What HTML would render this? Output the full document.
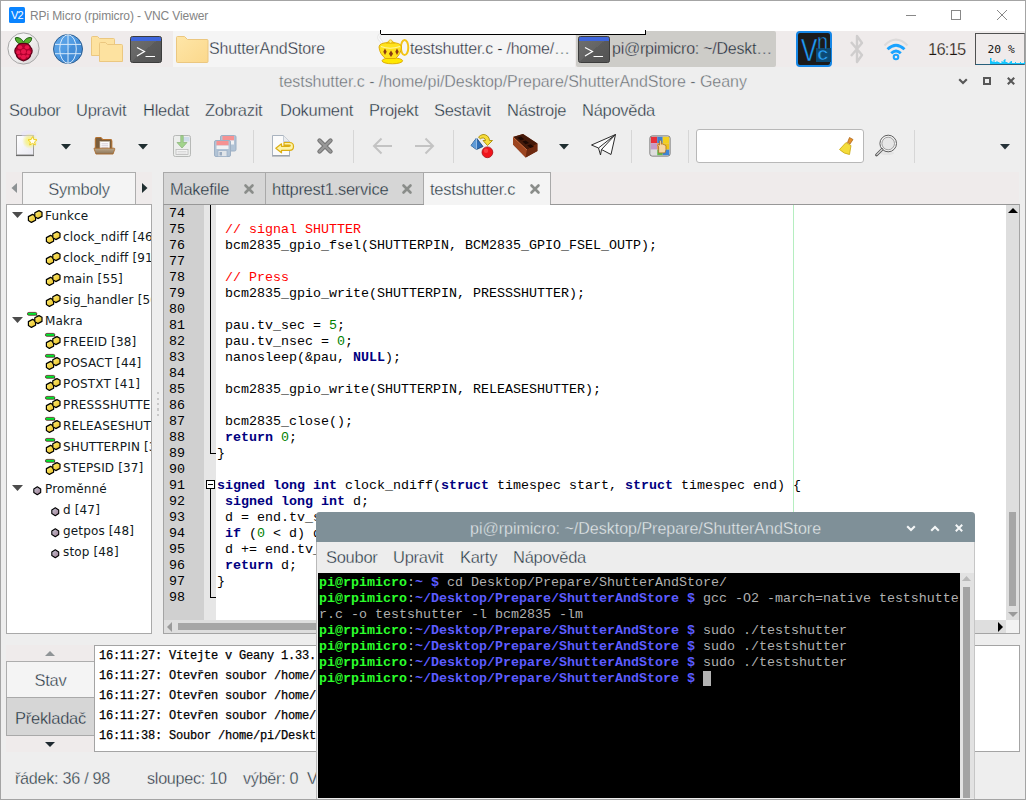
<!DOCTYPE html>
<html lang="cs">
<head>
<meta charset="utf-8">
<title>RPi Micro (rpimicro) - VNC Viewer</title>
<style>
*{box-sizing:border-box;margin:0;padding:0}
html,body{width:1026px;height:800px;overflow:hidden;background:#eeeeee}
body{position:relative;font-family:"Liberation Sans",sans-serif;color:#333}
.a{position:absolute}
.ui{-webkit-text-stroke:0.35px #ededed;position:absolute;font-family:"Liberation Sans",sans-serif;color:#22303c;white-space:nowrap;font-size:16.5px;line-height:20px;letter-spacing:-0.28px}
.mono{font-family:"Liberation Mono",monospace;white-space:pre}
.tree{position:absolute;font-family:"DejaVu Sans",sans-serif;font-size:12px;line-height:21px;color:#101820;white-space:nowrap;letter-spacing:0.15px}
.sep{position:absolute;top:130px;width:1px;height:33px;background:#d6d6d6}
svg{position:absolute;overflow:visible}
/* code */
#code{position:absolute;left:217px;top:206px;font-family:"Liberation Mono",monospace;font-size:13.33px;line-height:16px;white-space:pre;color:#000}
#code b{color:#00007f;font-weight:bold}
#code i{color:#ff0000;font-style:normal}
#code u{color:#007f00;text-decoration:none}
#lnum{position:absolute;left:169px;top:206px;font-family:"Liberation Mono",monospace;font-size:13.33px;line-height:16px;white-space:pre;color:#000}
#msgs{position:absolute;left:99px;top:646px;font-family:"Liberation Mono",monospace;font-size:12px;letter-spacing:-0.2px;line-height:20px;white-space:pre;color:#000;width:218px;overflow:hidden;-webkit-text-stroke:0.25px #000}
#term{position:absolute;left:319px;top:575px;font-family:"Liberation Mono",monospace;font-size:13.33px;line-height:16px;white-space:pre;color:#b0b0b0}
#term .g{color:#2bff2b;font-weight:bold}
#term .b{color:#5c5cff;font-weight:bold}
</style>
</head>
<body>
<!-- ================= VNC Viewer title bar ================= -->
<div class="a" style="left:0;top:0;width:1026px;height:31px;background:#fff"></div>
<div class="a" style="left:9px;top:7px;width:16px;height:16px;background:#0a84ff;border-radius:1.5px"></div>
<div class="a" style="left:10px;top:8px;width:14px;height:14px;font:11px/15px 'Liberation Sans',sans-serif;color:#fff;letter-spacing:-0.8px;text-align:center">V2</div>
<div class="a" style="left:30px;top:8px;font:12px/16px 'Liberation Sans',sans-serif;color:#848484;white-space:nowrap;letter-spacing:-0.11px">RPi Micro (rpimicro) - VNC Viewer</div>
<!-- window controls -->
<div class="a" style="left:906px;top:15px;width:10px;height:1px;background:#888"></div>
<div class="a" style="left:951px;top:10px;width:10px;height:10px;border:1px solid #888"></div>
<svg style="left:997px;top:10px" width="10" height="10" viewBox="0 0 10 10"><path d="M0 0 L10 10 M10 0 L0 10" stroke="#888" stroke-width="1" fill="none"/></svg>

<!-- ================= LXDE panel ================= -->
<div class="a" style="left:1px;top:31px;width:1024px;height:36px;background:#efebeb"></div>
<!-- task button: ShutterAndStore -->
<div class="a" style="left:173px;top:31px;width:202px;height:36px;background:#f5f5f5"></div>
<!-- task button: geany -->
<div class="a" style="left:375px;top:31px;width:200px;height:36px;background:#f5f5f5"></div>
<!-- task button: terminal (active) -->
<div class="a" style="left:576px;top:31px;width:200px;height:36px;background:#cdccc8;border-radius:2px"></div>
<!-- tooltip remnant -->
<div class="a" style="left:380px;top:30px;width:266px;height:5px;background:#fff;border:1px solid #000;border-top:0"></div>

<!-- raspberry menu icon -->
<svg style="left:6.500px;top:32px" width="33" height="33" viewBox="0 0 33 33">
<defs><linearGradient id="rc" x1="0" y1="0" x2="1" y2="1"><stop offset="0" stop-color="#fbfbfb"/><stop offset=".55" stop-color="#efeded"/><stop offset="1" stop-color="#d4d2d2"/></linearGradient></defs>
<circle cx="16.500" cy="16.500" r="15.600" fill="url(#rc)" stroke="#a6a6a6" stroke-width="1"/>
<g transform="translate(0 .7)"><path d="M16.500 9.500 C14.500 5 10 4.300 8.300 5.200 C8.300 9 11.500 11.800 16.500 11.500 C21.500 11.800 24.700 9 24.700 5.200 C23 4.300 18.500 5 16.500 9.500Z" fill="#55b030" stroke="#1f5a12" stroke-width="1"/>
<path d="M16.500 10.800 C20 10.300 23 12 23.500 14.500 C25.500 16 25.800 19.500 24 21.500 C23.500 24.500 21 27 16.500 28.300 C12 27 9.500 24.500 9 21.500 C7.200 19.500 7.500 16 9.500 14.500 C10 12 13 10.300 16.500 10.800Z" fill="#b0002e" stroke="#5c0018" stroke-width="1.100"/>
<g fill="#e8174c"><ellipse cx="13" cy="14.600" rx="2.300" ry="2"/><ellipse cx="20" cy="14.600" rx="2.300" ry="2"/><circle cx="16.500" cy="18.800" r="2.500"/><circle cx="11.300" cy="19.600" r="2"/><circle cx="21.700" cy="19.600" r="2"/><ellipse cx="16.500" cy="24.300" rx="2.600" ry="2.200"/><circle cx="12.500" cy="23.300" r="1.500"/><circle cx="20.500" cy="23.300" r="1.500"/></g></g>
</svg>
<!-- globe icon -->
<svg style="left:53px;top:34px" width="30" height="30" viewBox="0 0 30 30">
<defs><linearGradient id="gb" x1="0" y1="0" x2="1" y2="1"><stop offset="0" stop-color="#63a9ea"/><stop offset=".5" stop-color="#4f9ae2"/><stop offset=".5" stop-color="#4690da"/><stop offset="1" stop-color="#3f88d2"/></linearGradient></defs>
<circle cx="15" cy="15" r="14.500" fill="url(#gb)" stroke="#2f5f90" stroke-width="1"/>
<g fill="none" stroke="#d6e9fa" stroke-width="1"><ellipse cx="15" cy="15" rx="8.300" ry="14.300"/><path d="M15 1V29M2 10.400H28M2 19.700H28"/></g>
</svg>
<!-- folders icon -->
<svg style="left:91px;top:36px" width="33" height="27" viewBox="0 0 33 27">
<path d="M0.500 1.500 Q0.500 0.500 1.500 0.500 H6.500 L8.500 2.500 H22.500 Q23.500 2.500 23.500 3.500 V19.500 H0.500Z" fill="#fde2a0" stroke="#ebc780"/>
<path d="M8.500 7.500 Q8.500 6.500 9.500 6.500 H14.500 L16.500 8.500 H30.500 Q31.500 8.500 31.500 9.500 V25.500 H8.500Z" fill="#fde2a0" stroke="#ebc780"/>
</svg>
<!-- terminal launcher -->
<svg style="left:130px;top:36px" width="32" height="27" viewBox="0 0 32 27">
<defs><linearGradient id="tg" x1="0" y1="0" x2="1" y2="1"><stop offset="0" stop-color="#707070"/><stop offset=".5" stop-color="#646464"/><stop offset=".5" stop-color="#5b5b5b"/><stop offset="1" stop-color="#535353"/></linearGradient></defs>
<rect x="0.500" y="0.500" width="31" height="26" rx="2" fill="url(#tg)" stroke="#3c3c3c"/>
<path d="M1 2.500 Q1 1 2.500 1 H29.500 Q31 1 31 2.500 V5 H1Z" fill="#3f66dc"/>
<path d="M7 11.500 L14.500 15.500 L7 20 M15.500 20.500 H25" stroke="#fff" stroke-width="1.200" fill="none"/>
</svg>
<!-- task folder -->
<svg style="left:176px;top:36px" width="33" height="27" viewBox="0 0 33 27">
<defs><linearGradient id="fg" x1="0" y1="0" x2="1" y2="1"><stop offset="0" stop-color="#fee6a8"/><stop offset="1" stop-color="#fbd88c"/></linearGradient></defs>
<path d="M0.500 1.500 Q0.500 0.500 1.500 0.500 H8.500 L11.500 3.500 H31 Q32 3.500 32 4.500 V25.500 Q32 26.500 31 26.500 H1.500 Q0.500 26.500 0.500 25.500Z" fill="url(#fg)" stroke="#ebc780"/>
</svg>
<div class="ui" style="-webkit-text-stroke-color:#f5f5f5;left:209px;top:39px;font-size:16px;color:#1f2a38;letter-spacing:-0.15px">ShutterAndStore</div>
<!-- geany lamp icon -->
<svg style="left:377px;top:33px" width="33" height="32" viewBox="0 0 33 32">
<path d="M2.500 2 Q0.500 5 3.500 7.500 Q6 10 4.500 13.500" stroke="#e6e6e6" stroke-width="3" fill="none" stroke-linecap="round"/>
<path d="M2.500 2 Q0.500 5 3.500 7.500 Q6 10 4.500 13.500" stroke="#fafafa" stroke-width="1.200" fill="none" stroke-linecap="round"/>
<ellipse cx="15.300" cy="27.800" rx="10.300" ry="3" fill="#ffe800" stroke="#d9a600" stroke-width=".9"/>
<ellipse cx="27.600" cy="14.500" rx="3.700" ry="7.600" fill="none" stroke="#f2c417" stroke-width="2"/>
<path d="M2 14 Q2 9.500 13 9.500 Q24.500 9.500 24.500 14 Q24 21 18.500 25.500 H8.500 Q2.500 21 2 14Z" fill="#ffe21c" stroke="#dba700" stroke-width=".9"/>
<path d="M4 13.500 Q13 17 23 13.500" fill="none" stroke="#fff6a0" stroke-width="1.200"/>
<path d="M9.500 10 Q13.500 6 17.500 10Z" fill="#ffd91a" stroke="#dba700" stroke-width=".8"/>
<circle cx="13.500" cy="8.500" r="1.700" fill="#fff27a" stroke="#e0ad00" stroke-width=".7"/>
<g fill="#8a3a12"><path d="M8 15.500l1.700 3.200-1.700 3.200-1.700-3.200z"/><path d="M14 17.500l2 3.200-2 3.200-2-3.200z"/><path d="M20 15.500l1.700 3.200-1.700 3.200-1.700-3.200z"/></g>
</svg>
<div class="ui" style="-webkit-text-stroke-color:#f5f5f5;left:410px;top:39px;font-size:16px;color:#1f2a38;letter-spacing:-0.25px">testshutter.c - /home/…</div>
<!-- task terminal icon -->
<svg style="left:578px;top:36px" width="32" height="27" viewBox="0 0 32 27">
<rect x="0.500" y="0.500" width="31" height="26" rx="2" fill="url(#tg)" stroke="#3c3c3c"/>
<path d="M1 2.500 Q1 1 2.500 1 H29.500 Q31 1 31 2.500 V5 H1Z" fill="#3f66dc"/>
<path d="M7 11.500 L14.500 15.500 L7 20 M15.500 20.500 H25" stroke="#fff" stroke-width="1.200" fill="none"/>
</svg>
<div class="ui" style="-webkit-text-stroke-color:#cdccc8;left:612px;top:39px;font-size:16px;color:#1f2a38;letter-spacing:-0.25px">pi@rpimicro: ~/Deskt…</div>
<!-- VNC tray icon -->
<div class="a" style="left:796px;top:31px;width:36px;height:36px;background:#1b1b1b;border:2px solid #1787e6;border-radius:4px"></div>
<div class="a" style="left:816px;top:48px;width:15px;height:14px;background:#0c4a74"></div>
<div class="a" style="left:801px;top:34px;font:32px/32px 'Liberation Sans',sans-serif;color:#1f9af5;-webkit-text-stroke:0.45px #1b1b1b;transform:scaleX(.76);transform-origin:0 0">V</div>
<div class="a" style="left:817px;top:31px;font:22px/22px 'Liberation Sans',sans-serif;color:#1f9af5;-webkit-text-stroke:0.5px #1b1b1b;transform:scaleX(.9);transform-origin:0 0">n</div>
<div class="a" style="left:817px;top:44px;font:bold 19px/19px 'Liberation Sans',sans-serif;color:#2aa0f7;-webkit-text-stroke:0.7px #0c4a74;transform:scaleX(1.1);transform-origin:0 0">c</div>
<!-- bluetooth -->
<svg style="left:849px;top:33px" width="16" height="32" viewBox="0 0 16 32"><path d="M2 9 L13 22 L8 29 V3 L13 10 L2 23" fill="none" stroke="#cfcdcd" stroke-width="2.400" stroke-linejoin="round"/></svg>
<!-- wifi -->
<svg style="left:883px;top:37px" width="26" height="24" viewBox="0 0 26 24">
<path d="M1.500 8.500 Q13 -3 24.500 8.500" fill="none" stroke="#dcdada" stroke-width="2.200"/>
<path d="M4.500 12.300 Q13 4 21.500 12.300" fill="none" stroke="#1aa3ff" stroke-width="2.800"/>
<path d="M8.200 16.300 Q13 11.600 17.800 16.300" fill="none" stroke="#1aa3ff" stroke-width="2.800"/>
<circle cx="13" cy="20" r="2.300" fill="none" stroke="#1aa3ff" stroke-width="2"/>
</svg>
<div class="ui" style="-webkit-text-stroke-color:#efebeb;left:928px;top:39px;font-size:16.5px;color:#1c140e;letter-spacing:-0.75px;-webkit-text-stroke-width:0.25px">16:15</div>
<!-- cpu monitor -->
<div class="a" style="left:975px;top:33px;width:50px;height:32px;background:#efebeb;border:1px solid #505050;border-bottom-color:#27607c;border-right-color:#9a9a9a"></div>
<div class="a" style="left:987.500px;top:42px;font:11.300px/16px 'DejaVu Sans Mono',monospace;color:#151515;white-space:pre">20 %</div>
<svg style="left:976px;top:55px" width="49" height="9" viewBox="0 0 49 9"><path d="M14 9V3l1.500 0V6l1 0V7l1 0V5l1 0V7l2 0V6l1 0V7l2 0V8l2 0V6l1 0V7l1 0V5l1 0V4l1 0V7l2 0V8l2 0V7l1 0V6l1.500 0V8l3 0V7l1 0V8l4 0V7l1 0V8l3 0V7l1 0V3l1 0V9Z" fill="#14c6ff"/></svg>
<!-- ================= Geany window ================= -->
<div class="a" style="left:1px;top:67px;width:1024px;height:732px;background:#eeeeee"></div>
<div class="ui" style="left:279px;top:72px;font-size:16px;color:#656b71;letter-spacing:-0.04px">testshutter.c - /home/pi/Desktop/Prepare/ShutterAndStore - Geany</div>
<!-- geany window buttons -->
<svg style="left:958px;top:78px" width="10" height="7" viewBox="0 0 10 7"><path d="M1.200 1.200 L5 5 L8.800 1.200" stroke="#575757" stroke-width="2.100" fill="none"/></svg>
<div class="a" style="left:983px;top:77px;width:8px;height:8px;border:2px solid #575757"></div>
<svg style="left:1007px;top:77px" width="8" height="8" viewBox="0 0 8 8"><path d="M.8 .8 L7.200 7.200 M7.200 .8 L.8 7.200" stroke="#575757" stroke-width="2.100" fill="none"/></svg>

<!-- menu bar -->
<div class="ui" style="left:9px;top:100px">Soubor</div>
<div class="ui" style="left:76px;top:100px">Upravit</div>
<div class="ui" style="left:143px;top:100px">Hledat</div>
<div class="ui" style="left:205px;top:100px">Zobrazit</div>
<div class="ui" style="left:280px;top:100px">Dokument</div>
<div class="ui" style="left:369px;top:100px">Projekt</div>
<div class="ui" style="left:434px;top:100px">Sestavit</div>
<div class="ui" style="left:507px;top:100px">Nástroje</div>
<div class="ui" style="left:582px;top:100px">Nápověda</div>

<!-- toolbar -->
<div class="sep" style="left:253px"></div>
<div class="sep" style="left:353px"></div>
<div class="sep" style="left:453px"></div>
<div class="sep" style="left:631px"></div>
<div class="sep" style="left:688px"></div>
<div class="sep" style="left:914px"></div>
<!-- new -->
<svg style="left:15px;top:130px" width="24" height="28" viewBox="0 0 24 28">
<defs><linearGradient id="pg" x1="0" y1="0" x2="1" y2="1"><stop offset="0" stop-color="#fff"/><stop offset="1" stop-color="#e9e9f1"/></linearGradient>
<radialGradient id="glow"><stop offset="0" stop-color="#fff36a" stop-opacity=".95"/><stop offset=".55" stop-color="#f4ef62" stop-opacity=".55"/><stop offset="1" stop-color="#f4ef62" stop-opacity="0"/></radialGradient></defs>
<rect x="1.500" y="5.500" width="17" height="19.500" fill="url(#pg)" stroke="#9b9b9b"/>
<path d="M1 25.500 H19" stroke="#6b6b6b" stroke-width="1.200"/>
<ellipse cx="14" cy="4" rx="8" ry="3.500" fill="#e6e0ff" opacity=".45"/>
<circle cx="15" cy="11" r="8" fill="url(#glow)"/>
<path d="M17.500 6.600 l1.300 2.900 3.200 .3 -2.400 2.100 .7 3.100 -2.800-1.600 -2.800 1.600 .7-3.100 -2.400-2.100 3.200-.3z" fill="#fffef2" stroke="#f2cf1d" stroke-width="1"/>
</svg>
<svg style="left:60.5px;top:143.500px" width="10" height="5.500" viewBox="0 0 11 6"><path d="M0 0H11L5.500 6Z" fill="#1f2e30"/></svg>
<!-- open -->
<svg style="left:93px;top:136.300px" width="23" height="19.500" viewBox="0 0 25 20" preserveAspectRatio="none">
<defs><linearGradient id="fl" x1="0" y1="0" x2="0" y2="1"><stop offset="0" stop-color="#bda98c"/><stop offset="1" stop-color="#8c7355"/></linearGradient></defs>
<path d="M2.500 14 V3 Q2.500 1.500 4 1.500 H8.500 L10.500 3.500 H19 Q20.500 3.500 20.500 5 V14Z" fill="#7a5d3b" stroke="#b3702e" stroke-width="1.100"/>
<rect x="7.600" y="5.800" width="10.500" height="9.500" fill="#fdfdfd" stroke="#cfc7ba" stroke-width=".7"/>
<path d="M9.200 8H16.500M9.200 10H16.500M9.200 12H16.500" stroke="#c9bfc9" stroke-width=".8"/>
<path d="M1.200 12.500 H22.800 Q24 12.500 23.600 13.700 L21.800 18.500 H3.200 L1.400 13.700 Q1 12.500 1.200 12.500Z" fill="url(#fl)" stroke="#a8682a" stroke-width=".9"/>
</svg>
<svg style="left:137.5px;top:143.500px" width="10" height="5.500" viewBox="0 0 11 6"><path d="M0 0H11L5.500 6Z" fill="#1f2e30"/></svg>
<!-- save (disabled) -->
<svg style="left:172px;top:133px" width="20" height="25" viewBox="0 0 20 25" opacity=".55">
<rect x="1.500" y="2.500" width="17" height="21" rx="1.800" fill="#eceeec" stroke="#8b8f8b"/>
<rect x="11" y="4" width="6.500" height="4.500" fill="#b5cfe8"/>
<rect x="4" y="16.500" width="12" height="5" fill="#fafafa" stroke="#8f8f8f" stroke-width=".8"/>
<path d="M5.500 18.500H14.500M5.500 20H14.500" stroke="#b5b5b5" stroke-width=".7"/>
<path d="M8.800 2.500 H11.200 V9.500 H15 L10 15 L5 9.500 H8.800Z" fill="#63c03c" stroke="#3f8a22" stroke-width=".8"/>
</svg>
<!-- save all (disabled) -->
<svg style="left:213px;top:134px" width="25" height="24" viewBox="0 0 25 24" opacity=".52">
<rect x="7.500" y="1.500" width="15.500" height="15.500" rx="1.500" fill="#7b9cc0" stroke="#56789e"/>
<rect x="9.500" y="2" width="11.500" height="4.500" fill="#ff4040"/>
<rect x="9.500" y="6.500" width="11.500" height="4" fill="#f4f6f9"/>
<rect x="1.500" y="6.500" width="16" height="16" rx="1.500" fill="#7b9cc0" stroke="#56789e"/>
<rect x="3.500" y="7" width="12" height="4.500" fill="#ff4040"/>
<rect x="3.500" y="11.500" width="12" height="3.500" fill="#f4f6f9"/>
<rect x="5" y="16.500" width="9" height="6" fill="#d7dde6" stroke="#5b7fa8" stroke-width=".8"/>
<rect x="6.500" y="18" width="2.500" height="3.500" fill="#4f6f95"/>
</svg>
<!-- revert -->
<svg style="left:271px;top:134px" width="24" height="24" viewBox="0 0 24 24">
<path d="M1.500 1.500 H12.500 L18.500 7.500 V21.500 H1.500Z" fill="#fbfbfb" stroke="#a9b3bf"/>
<path d="M12.500 1.500 V7.500 H18.500" fill="#e9ebee" stroke="#b9c1cb" stroke-width=".8"/>
<path d="M1 22 H19" stroke="#8d939b" stroke-width="1"/>
<path d="M13 8.500 H18.500 Q22.500 8.500 22.500 12.400 Q22.500 16.300 18.500 16.300 H10.500 V18.800 L4.800 14.300 L10.500 9.800 V12.300 H18 Q19.300 12.300 19.300 11.800 Q19.300 11.200 18 11.200 H13Z" fill="#fdf3a8" stroke="#dcae12" stroke-width="1.200" stroke-linejoin="round"/>
</svg>
<!-- close -->
<svg style="left:316px;top:137px" width="18" height="18" viewBox="0 0 18 18"><path d="M3.500 3.500 L14.500 14.500 M14.500 3.500 L3.500 14.500" stroke="#747474" stroke-width="4.400" stroke-linecap="round"/><path d="M3.500 3.500 L14.500 14.500 M14.500 3.500 L3.500 14.500" stroke="#999" stroke-width="2.400" stroke-linecap="round"/></svg>
<!-- back / forward -->
<svg style="left:372px;top:137px" width="21" height="18" viewBox="0 0 21 18"><path d="M20 9 H2 M9.500 1.500 L2 9 L9.500 16.500" fill="none" stroke="#c3c3c3" stroke-width="2"/></svg>
<svg style="left:414px;top:137px" width="21" height="18" viewBox="0 0 21 18"><path d="M1 9 H19 M11.500 1.500 L19 9 L11.500 16.500" fill="none" stroke="#c3c3c3" stroke-width="2"/></svg>
<!-- compile -->
<svg style="left:470px;top:133px" width="25" height="26" viewBox="0 0 25 26">
<path d="M8.500 4 Q13 -0.500 17.500 3 Q19.500 5 19.500 7.500 L22.500 7.500 L17.500 12.500 L13 7.500 L15.500 7.500 Q15.500 5.500 13.500 5 Q11.500 4.500 10.500 6Z" fill="#f7dd3a" stroke="#a98c06" stroke-width=".9" stroke-linejoin="round"/>
<path d="M6.500 5 L13 13.500 L6.500 16.500 L1 12.500Z" fill="#2e6db5" stroke="#173f6e" stroke-width=".8" stroke-linejoin="round"/>
<path d="M6.500 5 L6.500 16.500 L1 12.500Z" fill="#5e9ad6"/>
<path d="M6.500 5 V16.500" stroke="#b9d6f2" stroke-width=".7"/>
<circle cx="17.400" cy="19.300" r="5.400" fill="#f0141c" stroke="#a50c12" stroke-width=".8"/>
<circle cx="16" cy="17.800" r="2.200" fill="#ff5a5a" opacity=".6"/>
</svg>
<!-- build (brick) -->
<svg style="left:512px;top:133px" width="26" height="26" viewBox="0 0 26 26">
<path d="M1 4 L11 1 L25.400 10.600 V18 L13.700 24.500 L1 11.500Z" fill="#7a2f12"/>
<path d="M1 4 L11 1 L25.400 10.600 L15 17Z" fill="#451a0a"/>
<path d="M1 4 L15 17 L13.700 24.500 L1 11.500Z" fill="#9c4520"/>
<path d="M15 17 L25.400 10.600 V18 L13.700 24.500Z" fill="#6e2a10"/>
<path d="M1 4 L15 17" stroke="#d87a4a" stroke-width=".8"/>
<path d="M5.500 4.800 l3.500-1.200 3.300 2.600-3.500 1.300zM10.300 8.600 l3.500-1.200 3.300 2.600-3.500 1.300zM15.100 12.400 l3.500-1.200 3.300 2.600-3.500 1.300z" fill="#1e0903"/>
</svg>
<svg style="left:558.5px;top:143.500px" width="10" height="5.500" viewBox="0 0 11 6"><path d="M0 0H11L5.500 6Z" fill="#1f2e30"/></svg>
<!-- run (paper plane) -->
<svg style="left:590px;top:133px" width="27" height="24" viewBox="0 0 27 24"><path d="M1.500 12 L25.500 1.500 L21 21.500 L11.500 16.500 L10.500 22 L8.500 15 Z M25.500 1.500 L8.500 15 M25.500 1.500 L11.500 16.500" fill="#fdfdfd" stroke="#2b2b2b" stroke-width="1" stroke-linejoin="round"/></svg>
<!-- color chooser -->
<svg style="left:649px;top:135px" width="22" height="22" viewBox="0 0 24 24">
<rect x="1" y="1" width="22" height="22" rx="2.500" fill="#e9e9e9" stroke="#6c6c6c"/>
<rect x="2" y="2" width="7" height="7" fill="#e8303a"/><rect x="9" y="2" width="6" height="7" fill="#3b7fd1"/><rect x="15" y="2" width="7" height="7" fill="#f3d01d"/>
<rect x="2" y="9" width="7" height="7" fill="#c59ac8"/><rect x="9" y="9" width="6" height="7" fill="#f08a2c"/><rect x="15" y="9" width="7" height="7" fill="#f0c419"/>
<rect x="2" y="16" width="7" height="6" fill="#dedede"/><rect x="9" y="16" width="6" height="6" fill="#63b84a"/><rect x="15" y="16" width="7" height="6" fill="#3d84d6"/>
<path d="M10.500 19.500 V13 L9.500 11 Q10 9.500 11.500 11 V6.500 Q12.500 5 13.500 6.500 V10 Q14.500 9 15.300 10.300 Q16.300 9.500 17 11 Q18 10.500 18.500 12 V16 L17.500 19.500Z" fill="#f7d7a4" stroke="#9c6a22" stroke-width=".8"/>
</svg>
<!-- search entry -->
<div class="a" style="left:696px;top:129px;width:168px;height:34px;background:#fff;border:1px solid #b8b8b8;border-radius:3px"></div>
<svg style="left:838px;top:136px" width="18" height="20" viewBox="0 0 18 20">
<path d="M11.500 1.500 L15 3.500 L12 8 L9.500 6.500Z" fill="#e8912b" stroke="#a35f10" stroke-width=".7"/>
<path d="M8 6.500 L13 9.500 L11.500 18.500 Q6 18 1.500 13.500Z" fill="#f4dc3a" stroke="#c9a80f" stroke-width=".8"/>
</svg>
<!-- find icon -->
<svg style="left:873px;top:133px" width="25" height="25" viewBox="0 0 25 25">
<ellipse cx="14" cy="20" rx="7" ry="2" fill="#d9d9d9" opacity=".5"/>
<circle cx="15.200" cy="10.500" r="8.300" fill="#f4f4f4" stroke="#5e5e5e" stroke-width="1"/>
<circle cx="15.200" cy="10.500" r="6.300" fill="#e6e6e6" stroke="#8a8a8a" stroke-width=".8"/>
<path d="M9 16.500 L3.500 22" stroke="#555" stroke-width="2.800" stroke-linecap="round"/>
<path d="M9 16.500 L3.800 21.700" stroke="#e0e0e0" stroke-width="1.100" stroke-linecap="round"/>
</svg>
<svg style="left:999.5px;top:143.500px" width="10" height="5.500" viewBox="0 0 11 6"><path d="M0 0H11L5.500 6Z" fill="#263238"/></svg>
<!-- ================= notebook tab strips ================= -->
<div class="a" style="left:6px;top:172px;width:146px;height:33px;background:#efebeb"></div>
<div class="a" style="left:164px;top:172px;width:855px;height:33px;background:#efebeb"></div>
<!-- sidebar tab -->
<svg style="left:11px;top:183px" width="6" height="10" viewBox="0 0 6 10"><path d="M6 0V10L.5 5Z" fill="#8d9294"/></svg>
<div class="a" style="left:22px;top:172px;width:114px;height:34px;background:#f4f4f4;border:1px solid #adadad;border-bottom:0"></div>
<div class="ui" style="-webkit-text-stroke-color:#f4f4f4;left:22px;top:179px;width:114px;text-align:center">Symboly</div>
<svg style="left:142px;top:183px" width="6" height="10" viewBox="0 0 6 10"><path d="M0 0V10L5.500 5Z" fill="#1f2e30"/></svg>
<!-- document tabs -->
<div class="a" style="left:163px;top:172px;width:103px;height:32px;background:#d6d6d6;border:1px solid #a9a9a9;border-bottom:0"></div>
<div class="ui" style="-webkit-text-stroke-color:#d6d6d6;left:170px;top:179px;">Makefile</div>
<div class="a" style="left:265px;top:172px;width:159px;height:32px;background:#d6d6d6;border:1px solid #a9a9a9;border-bottom:0"></div>
<div class="ui" style="-webkit-text-stroke-color:#d6d6d6;left:272px;top:179px;">httprest1.service</div>
<div class="a" style="left:423px;top:172px;width:128px;height:33px;background:#f4f4f4;border:1px solid #a9a9a9;border-bottom:0"></div>
<div class="ui" style="-webkit-text-stroke-color:#f4f4f4;left:430px;top:179px;">testshutter.c</div>
<svg style="left:244px;top:184px" width="10" height="10" viewBox="0 0 10 10"><path d="M1.500 1.500 L8.500 8.500 M8.500 1.500 L1.500 8.500" stroke="#8a8d8a" stroke-width="2.600" stroke-linecap="round"/></svg>
<svg style="left:402px;top:184px" width="10" height="10" viewBox="0 0 10 10"><path d="M1.500 1.500 L8.500 8.500 M8.500 1.500 L1.500 8.500" stroke="#8a8d8a" stroke-width="2.600" stroke-linecap="round"/></svg>
<svg style="left:530px;top:184px" width="10" height="10" viewBox="0 0 10 10"><path d="M1.500 1.500 L8.500 8.500 M8.500 1.500 L1.500 8.500" stroke="#8a8d8a" stroke-width="2.600" stroke-linecap="round"/></svg>

<!-- ================= sidebar tree ================= -->
<div class="a" style="left:6px;top:204px;width:146px;height:430px;background:#fff;border:1px solid #a9a9a9"></div>
<div class="a" style="left:7px;top:205px;width:144px;height:428px;overflow:hidden" id="treeclip">
<svg width="0" height="0" style="left:0;top:0"><defs>
<linearGradient id="yg" x1="0" y1="0" x2="1" y2="1"><stop offset="0" stop-color="#fff27a"/><stop offset="1" stop-color="#e6b91e"/></linearGradient>
<linearGradient id="gg" x1="0" y1="0" x2="1" y2="1"><stop offset="0" stop-color="#c4c8d6"/><stop offset="1" stop-color="#a07a90"/></linearGradient>
</defs></svg>
<svg style="left:5px;top:7px" width="11" height="6" viewBox="0 0 11 6"><path d="M0 0H11L5.500 6Z" fill="#4c4c4c"/></svg>
<svg style="left:20px;top:2px" width="16" height="16" viewBox="0 0 16 16"><path d="M1.400 9.600 L5.600 7.400 L8.600 9 V13.200 L4.400 15.400 L1.400 13.600Z" fill="url(#yg)" stroke="#000" stroke-width="1.200" stroke-linejoin="round"/><path d="M7.800 5.800 L12 3.600 L15 5.200 V9.400 L10.800 11.600 L7.800 9.800Z" fill="url(#yg)" stroke="#000" stroke-width="1.200" stroke-linejoin="round"/></svg>
<div class="tree" style="left:38px;top:1px">Funkce</div>
<svg style="left:38px;top:23px" width="16" height="16" viewBox="0 0 16 16"><path d="M1.400 9.600 L5.600 7.400 L8.600 9 V13.200 L4.400 15.400 L1.400 13.600Z" fill="url(#yg)" stroke="#000" stroke-width="1.200" stroke-linejoin="round"/><path d="M7.800 5.800 L12 3.600 L15 5.200 V9.400 L10.800 11.600 L7.800 9.800Z" fill="url(#yg)" stroke="#000" stroke-width="1.200" stroke-linejoin="round"/></svg>
<div class="tree" style="left:56px;top:22px">clock_ndiff [46]</div>
<svg style="left:38px;top:44px" width="16" height="16" viewBox="0 0 16 16"><path d="M1.400 9.600 L5.600 7.400 L8.600 9 V13.200 L4.400 15.400 L1.400 13.600Z" fill="url(#yg)" stroke="#000" stroke-width="1.200" stroke-linejoin="round"/><path d="M7.800 5.800 L12 3.600 L15 5.200 V9.400 L10.800 11.600 L7.800 9.800Z" fill="url(#yg)" stroke="#000" stroke-width="1.200" stroke-linejoin="round"/></svg>
<div class="tree" style="left:56px;top:43px">clock_ndiff [91]</div>
<svg style="left:38px;top:65px" width="16" height="16" viewBox="0 0 16 16"><path d="M1.400 9.600 L5.600 7.400 L8.600 9 V13.200 L4.400 15.400 L1.400 13.600Z" fill="url(#yg)" stroke="#000" stroke-width="1.200" stroke-linejoin="round"/><path d="M7.800 5.800 L12 3.600 L15 5.200 V9.400 L10.800 11.600 L7.800 9.800Z" fill="url(#yg)" stroke="#000" stroke-width="1.200" stroke-linejoin="round"/></svg>
<div class="tree" style="left:56px;top:64px">main [55]</div>
<svg style="left:38px;top:86px" width="16" height="16" viewBox="0 0 16 16"><path d="M1.400 9.600 L5.600 7.400 L8.600 9 V13.200 L4.400 15.400 L1.400 13.600Z" fill="url(#yg)" stroke="#000" stroke-width="1.200" stroke-linejoin="round"/><path d="M7.800 5.800 L12 3.600 L15 5.200 V9.400 L10.800 11.600 L7.800 9.800Z" fill="url(#yg)" stroke="#000" stroke-width="1.200" stroke-linejoin="round"/></svg>
<div class="tree" style="left:56px;top:85px">sig_handler [50]</div>
<svg style="left:5px;top:112px" width="11" height="6" viewBox="0 0 11 6"><path d="M0 0H11L5.500 6Z" fill="#4c4c4c"/></svg>
<svg style="left:20px;top:107px" width="16" height="16" viewBox="0 0 16 16"><path d="M1.400 9.600 L5.600 7.400 L8.600 9 V13.200 L4.400 15.400 L1.400 13.600Z" fill="url(#yg)" stroke="#000" stroke-width="1.200" stroke-linejoin="round"/><path d="M7.800 5.800 L12 3.600 L15 5.200 V9.400 L10.800 11.600 L7.800 9.800Z" fill="url(#yg)" stroke="#000" stroke-width="1.200" stroke-linejoin="round"/><rect x="0.400" y="0.400" width="9.400" height="2.900" rx="1.400" fill="#00e62e" stroke="#5a0a1a" stroke-width=".7"/><path d="M9.300 3 L10.800 4.300" stroke="#000" stroke-width="1"/></svg>
<div class="tree" style="left:38px;top:106px">Makra</div>
<svg style="left:38px;top:128px" width="16" height="16" viewBox="0 0 16 16"><path d="M1.400 9.600 L5.600 7.400 L8.600 9 V13.200 L4.400 15.400 L1.400 13.600Z" fill="url(#yg)" stroke="#000" stroke-width="1.200" stroke-linejoin="round"/><path d="M7.800 5.800 L12 3.600 L15 5.200 V9.400 L10.800 11.600 L7.800 9.800Z" fill="url(#yg)" stroke="#000" stroke-width="1.200" stroke-linejoin="round"/><rect x="0.400" y="0.400" width="9.400" height="2.900" rx="1.400" fill="#00e62e" stroke="#5a0a1a" stroke-width=".7"/><path d="M9.300 3 L10.800 4.300" stroke="#000" stroke-width="1"/></svg>
<div class="tree" style="left:56px;top:127px">FREEID [38]</div>
<svg style="left:38px;top:149px" width="16" height="16" viewBox="0 0 16 16"><path d="M1.400 9.600 L5.600 7.400 L8.600 9 V13.200 L4.400 15.400 L1.400 13.600Z" fill="url(#yg)" stroke="#000" stroke-width="1.200" stroke-linejoin="round"/><path d="M7.800 5.800 L12 3.600 L15 5.200 V9.400 L10.800 11.600 L7.800 9.800Z" fill="url(#yg)" stroke="#000" stroke-width="1.200" stroke-linejoin="round"/><rect x="0.400" y="0.400" width="9.400" height="2.900" rx="1.400" fill="#00e62e" stroke="#5a0a1a" stroke-width=".7"/><path d="M9.300 3 L10.800 4.300" stroke="#000" stroke-width="1"/></svg>
<div class="tree" style="left:56px;top:148px">POSACT [44]</div>
<svg style="left:38px;top:170px" width="16" height="16" viewBox="0 0 16 16"><path d="M1.400 9.600 L5.600 7.400 L8.600 9 V13.200 L4.400 15.400 L1.400 13.600Z" fill="url(#yg)" stroke="#000" stroke-width="1.200" stroke-linejoin="round"/><path d="M7.800 5.800 L12 3.600 L15 5.200 V9.400 L10.800 11.600 L7.800 9.800Z" fill="url(#yg)" stroke="#000" stroke-width="1.200" stroke-linejoin="round"/><rect x="0.400" y="0.400" width="9.400" height="2.900" rx="1.400" fill="#00e62e" stroke="#5a0a1a" stroke-width=".7"/><path d="M9.300 3 L10.800 4.300" stroke="#000" stroke-width="1"/></svg>
<div class="tree" style="left:56px;top:169px">POSTXT [41]</div>
<svg style="left:38px;top:191px" width="16" height="16" viewBox="0 0 16 16"><path d="M1.400 9.600 L5.600 7.400 L8.600 9 V13.200 L4.400 15.400 L1.400 13.600Z" fill="url(#yg)" stroke="#000" stroke-width="1.200" stroke-linejoin="round"/><path d="M7.800 5.800 L12 3.600 L15 5.200 V9.400 L10.800 11.600 L7.800 9.800Z" fill="url(#yg)" stroke="#000" stroke-width="1.200" stroke-linejoin="round"/><rect x="0.400" y="0.400" width="9.400" height="2.900" rx="1.400" fill="#00e62e" stroke="#5a0a1a" stroke-width=".7"/><path d="M9.300 3 L10.800 4.300" stroke="#000" stroke-width="1"/></svg>
<div class="tree" style="left:56px;top:190px">PRESSSHUTTER [35]</div>
<svg style="left:38px;top:212px" width="16" height="16" viewBox="0 0 16 16"><path d="M1.400 9.600 L5.600 7.400 L8.600 9 V13.200 L4.400 15.400 L1.400 13.600Z" fill="url(#yg)" stroke="#000" stroke-width="1.200" stroke-linejoin="round"/><path d="M7.800 5.800 L12 3.600 L15 5.200 V9.400 L10.800 11.600 L7.800 9.800Z" fill="url(#yg)" stroke="#000" stroke-width="1.200" stroke-linejoin="round"/><rect x="0.400" y="0.400" width="9.400" height="2.900" rx="1.400" fill="#00e62e" stroke="#5a0a1a" stroke-width=".7"/><path d="M9.300 3 L10.800 4.300" stroke="#000" stroke-width="1"/></svg>
<div class="tree" style="left:56px;top:211px">RELEASESHUTTER [36]</div>
<svg style="left:38px;top:233px" width="16" height="16" viewBox="0 0 16 16"><path d="M1.400 9.600 L5.600 7.400 L8.600 9 V13.200 L4.400 15.400 L1.400 13.600Z" fill="url(#yg)" stroke="#000" stroke-width="1.200" stroke-linejoin="round"/><path d="M7.800 5.800 L12 3.600 L15 5.200 V9.400 L10.800 11.600 L7.800 9.800Z" fill="url(#yg)" stroke="#000" stroke-width="1.200" stroke-linejoin="round"/><rect x="0.400" y="0.400" width="9.400" height="2.900" rx="1.400" fill="#00e62e" stroke="#5a0a1a" stroke-width=".7"/><path d="M9.300 3 L10.800 4.300" stroke="#000" stroke-width="1"/></svg>
<div class="tree" style="left:56px;top:232px">SHUTTERPIN [34]</div>
<svg style="left:38px;top:254px" width="16" height="16" viewBox="0 0 16 16"><path d="M1.400 9.600 L5.600 7.400 L8.600 9 V13.200 L4.400 15.400 L1.400 13.600Z" fill="url(#yg)" stroke="#000" stroke-width="1.200" stroke-linejoin="round"/><path d="M7.800 5.800 L12 3.600 L15 5.200 V9.400 L10.800 11.600 L7.800 9.800Z" fill="url(#yg)" stroke="#000" stroke-width="1.200" stroke-linejoin="round"/><rect x="0.400" y="0.400" width="9.400" height="2.900" rx="1.400" fill="#00e62e" stroke="#5a0a1a" stroke-width=".7"/><path d="M9.300 3 L10.800 4.300" stroke="#000" stroke-width="1"/></svg>
<div class="tree" style="left:56px;top:253px">STEPSID [37]</div>
<svg style="left:5px;top:280px" width="11" height="6" viewBox="0 0 11 6"><path d="M0 0H11L5.500 6Z" fill="#4c4c4c"/></svg>
<svg style="left:26px;top:281px" width="9" height="10" viewBox="0 0 9 10"><path d="M0.800 3 L4.300 0.800 L7.700 3 V6.500 L4.300 8.700 L0.800 6.500Z" fill="url(#gg)" stroke="#000" stroke-width="1.100" stroke-linejoin="round"/></svg>
<div class="tree" style="left:38px;top:274px">Proměnné</div>
<svg style="left:44px;top:302px" width="9" height="10" viewBox="0 0 9 10"><path d="M0.800 3 L4.300 0.800 L7.700 3 V6.500 L4.300 8.700 L0.800 6.500Z" fill="url(#gg)" stroke="#000" stroke-width="1.100" stroke-linejoin="round"/></svg>
<div class="tree" style="left:56px;top:295px">d [47]</div>
<svg style="left:44px;top:323px" width="9" height="10" viewBox="0 0 9 10"><path d="M0.800 3 L4.300 0.800 L7.700 3 V6.500 L4.300 8.700 L0.800 6.500Z" fill="url(#gg)" stroke="#000" stroke-width="1.100" stroke-linejoin="round"/></svg>
<div class="tree" style="left:56px;top:316px">getpos [48]</div>
<svg style="left:44px;top:344px" width="9" height="10" viewBox="0 0 9 10"><path d="M0.800 3 L4.300 0.800 L7.700 3 V6.500 L4.300 8.700 L0.800 6.500Z" fill="url(#gg)" stroke="#000" stroke-width="1.100" stroke-linejoin="round"/></svg>
<div class="tree" style="left:56px;top:337px">stop [48]</div>
</div>
<!-- paned handle dots -->
<div class="a" style="left:157px;top:392px;width:2px;height:24px;background:repeating-linear-gradient(#c9c9c9 0 2px,transparent 2px 5.500px)"></div>

<!-- ================= editor ================= -->
<div class="a" style="left:163px;top:204px;width:857px;height:430px;background:#fff;border:1px solid #a4a4a4;border-top-color:#979797"></div>
<div class="a" style="left:424px;top:204px;width:126px;height:1px;background:#f4f4f4"></div>
<div class="a" style="left:164px;top:205px;width:40px;height:415px;background:#d0d0d0"></div>
<div class="a" style="left:204px;top:205px;width:12px;height:415px;background:#e6e6e6"></div>
<div class="a" style="left:793px;top:205px;width:1px;height:415px;background:#b5eec0"></div>
<!-- fold lines -->
<div class="a" style="left:210px;top:205px;width:1px;height:248px;background:#000"></div>
<div class="a" style="left:210px;top:453px;width:6px;height:1px;background:#000"></div>
<div class="a" style="left:210px;top:489px;width:1px;height:108px;background:#000"></div>
<div class="a" style="left:210px;top:597px;width:6px;height:1px;background:#000"></div>
<div class="a" style="left:206px;top:480px;width:9px;height:9px;background:#fff;border:1px solid #000"></div>
<div class="a" style="left:208px;top:484px;width:5px;height:1px;background:#000"></div>
<div id="lnum">74
75
76
77
78
79
80
81
82
83
84
85
86
87
88
89
90
91
92
93
94
95
96
97
98</div>
<div id="code">
 <i>// signal SHUTTER</i>
 bcm2835_gpio_fsel(SHUTTERPIN, BCM2835_GPIO_FSEL_OUTP);

 <i>// Press</i>
 bcm2835_gpio_write(SHUTTERPIN, PRESSSHUTTER);

 pau.tv_sec = <u>5</u>;
 pau.tv_nsec = <u>0</u>;
 nanosleep(&amp;pau, <b>NULL</b>);

 bcm2835_gpio_write(SHUTTERPIN, RELEASESHUTTER);

 bcm2835_close();
 <b>return</b> <u>0</u>;
}

<b>signed</b> <b>long</b> <b>int</b> clock_ndiff(<b>struct</b> timespec start, <b>struct</b> timespec end) {
 <b>signed</b> <b>long</b> <b>int</b> d;
 d = end.tv_sec - start.tv_sec;
 <b>if</b> (<u>0</u> &lt; d) d *= <u>1000000000</u>;
 d += end.tv_nsec - start.tv_nsec;
 <b>return</b> d;
}
</div>
<!-- vertical scrollbar -->
<div class="a" style="left:1006px;top:205px;width:13px;height:415px;background:#dedede"></div>
<svg style="left:1008px;top:208px" width="10" height="5" viewBox="0 0 10 5"><path d="M0 5H10L5 0Z" fill="#000"/></svg>
<div class="a" style="left:1009px;top:512px;width:7px;height:94px;background:#a6a6a6"></div>
<svg style="left:1008px;top:612px" width="10" height="5" viewBox="0 0 10 5"><path d="M0 0H10L5 5Z" fill="#9a9a9a"/></svg>
<!-- horizontal scrollbar -->
<div class="a" style="left:164px;top:620px;width:842px;height:13px;background:#dedede"></div>
<div class="a" style="left:1006px;top:620px;width:13px;height:13px;background:#f2f2f2"></div>
<svg style="left:167px;top:622px" width="5" height="10" viewBox="0 0 5 10"><path d="M5 0V10L0 5Z" fill="#9a9a9a"/></svg>
<div class="a" style="left:178px;top:623px;width:789px;height:7px;background:#a6a6a6"></div>
<svg style="left:998px;top:622px" width="5" height="10" viewBox="0 0 5 10"><path d="M0 0V10L5 5Z" fill="#000"/></svg>
<!-- ================= message window ================= -->
<div class="a" style="left:6px;top:645px;width:89px;height:107px;background:#efebeb"></div>
<svg style="left:45px;top:651px" width="10" height="5" viewBox="0 0 10 5"><path d="M0 5H10L5 0Z" fill="#8f9496"/></svg>
<div class="a" style="left:6px;top:661px;width:89px;height:37px;background:#f4f4f4;border:1px solid #adadad;border-right:0"></div>
<div class="ui" style="-webkit-text-stroke-color:#f4f4f4;left:6px;top:669.5px;width:89px;text-align:center">Stav</div>
<div class="a" style="left:6px;top:697px;width:89px;height:39px;background:#d6d6d6;border:1px solid #a9a9a9;border-right:0"></div>
<div class="ui" style="-webkit-text-stroke-color:#d6d6d6;left:6px;top:707.5px;width:89px;text-align:center">Překladač</div>
<svg style="left:45px;top:742px" width="10" height="5" viewBox="0 0 10 5"><path d="M0 0H10L5 5Z" fill="#1f2a30"/></svg>
<div class="a" style="left:94px;top:645px;width:926px;height:107px;background:#fff;border:1px solid #a4a4a4"></div>
<div id="msgs">16:11:27: Vítejte v Geany 1.33.
16:11:27: Otevřen soubor /home/pi/Desktop/Prepare/ShutterAndStore/Makefile (1).
16:11:27: Otevřen soubor /home/pi/Desktop/Prepare/ShutterAndStore/httprest1.service (2).
16:11:27: Otevřen soubor /home/pi/Desktop/Prepare/ShutterAndStore/testshutter.c (3).
16:11:38: Soubor /home/pi/Desktop/Prepare/ShutterAndStore/testshutter.c uložen.</div>
<!-- status bar -->
<div class="ui" style="left:15px;top:768px;font-size:16.2px">řádek: 36 / 98</div>
<div class="ui" style="left:147px;top:768px;font-size:16.2px">sloupec: 10</div>
<div class="ui" style="left:243px;top:768px;font-size:16.2px">výběr: 0</div>
<div class="ui" style="left:307px;top:768px;font-size:16.2px">VLOŽ</div>

<!-- ================= LXTerminal window ================= -->
<div class="a" style="left:316px;top:512px;width:659px;height:288px;background:#ededed;border-radius:4px 4px 0 0;border-left:1px solid #b9b9b9;border-right:1px solid #c6c6c6"></div>
<div class="a" style="left:316px;top:512px;width:659px;height:30px;background:#7f9098;border-radius:4px 4px 0 0"></div>
<div class="ui" style="-webkit-text-stroke-color:#7f9098;left:470px;top:519px;font-size:16px;color:#e9edef;letter-spacing:0">pi@rpimicro: ~/Desktop/Prepare/ShutterAndStore</div>
<svg style="left:906px;top:525px" width="10" height="7" viewBox="0 0 10 7"><path d="M1.200 1.200 L5 5 L8.800 1.200" stroke="#f4f6f7" stroke-width="2.100" fill="none"/></svg>
<svg style="left:930px;top:525px" width="10" height="7" viewBox="0 0 10 7"><path d="M1.200 5.800 L5 2 L8.800 5.800" stroke="#f4f6f7" stroke-width="2.100" fill="none"/></svg>
<svg style="left:955px;top:524px" width="8" height="8" viewBox="0 0 8 8"><path d="M.8 .8 L7.200 7.200 M7.200 .8 L.8 7.200" stroke="#f4f6f7" stroke-width="2" fill="none"/></svg>
<div class="ui" style="left:326px;top:547px">Soubor</div>
<div class="ui" style="left:393px;top:547px">Upravit</div>
<div class="ui" style="left:460px;top:547px">Karty</div>
<div class="ui" style="left:513px;top:547px">Nápověda</div>
<div class="a" style="left:318px;top:573px;width:642px;height:225px;background:#000"></div>
<div class="a" style="left:960px;top:573px;width:14px;height:225px;background:#e2e2e2"></div>
<div class="a" style="left:963px;top:587px;width:7px;height:211px;background:#a3a3a3"></div>
<svg style="left:962px;top:576px" width="9" height="5" viewBox="0 0 9 5"><path d="M0 5H9L4.500 0Z" fill="#b9b9b9"/></svg>
<div id="term"><span class="g">pi@rpimicro</span>:<span class="b">~ $</span> cd Desktop/Prepare/ShutterAndStore/
<span class="g">pi@rpimicro</span>:<span class="b">~/Desktop/Prepare/ShutterAndStore $</span> gcc -O2 -march=native testshutte
r.c -o testshutter -l bcm2835 -lm
<span class="g">pi@rpimicro</span>:<span class="b">~/Desktop/Prepare/ShutterAndStore $</span> sudo ./testshutter
<span class="g">pi@rpimicro</span>:<span class="b">~/Desktop/Prepare/ShutterAndStore $</span> sudo ./testshutter
<span class="g">pi@rpimicro</span>:<span class="b">~/Desktop/Prepare/ShutterAndStore $</span> sudo ./testshutter
<span class="g">pi@rpimicro</span>:<span class="b">~/Desktop/Prepare/ShutterAndStore $</span> </div>
<div class="a" style="left:703px;top:671px;width:8px;height:15px;background:#b2b2b2"></div>

<!-- ================= outer frame ================= -->
<div class="a" style="left:0;top:0;width:1px;height:800px;background:#a4a4a4"></div>
<div class="a" style="left:0;top:0;width:1026px;height:1px;background:#a4a4a4"></div>
<div class="a" style="left:1025px;top:0;width:1px;height:800px;background:#a4a4a4"></div>
<div class="a" style="left:0;top:799px;width:1026px;height:1px;background:#a4a4a4"></div>
</body>
</html>
